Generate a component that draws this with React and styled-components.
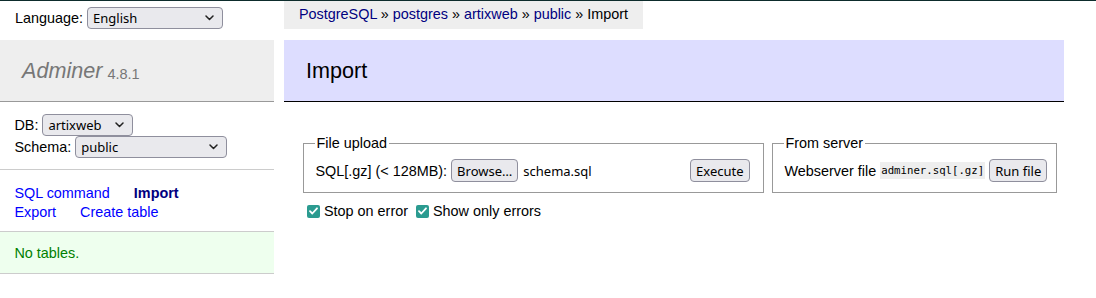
import styled, { createGlobalStyle } from "styled-components";

const GlobalStyle = createGlobalStyle`
  html, body {
    margin: 0;
    padding: 0;
    background: #fff;
  }
  body {
    color: #000;
    font: 14.4px/1.25 "Liberation Sans", Arial, sans-serif;
    border-top: 1px solid #0d2c2c;
  }
`;

const Page = styled.div`
  display: flex;
  align-items: flex-start;
  gap: 10px;
`;

/* left menu */
const Menu = styled.nav`
  width: 274px;
  flex: none;
  display: flex;
  flex-direction: column;
`;

const LangBar = styled.div`
  height: 39px;
  box-sizing: border-box;
  padding: 6px 15px 0;
  display: flex;
  align-items: flex-start;
  gap: 4px;
  line-height: 22px;
`;

const Title = styled.h1`
  margin: 0;
  height: 62px;
  box-sizing: border-box;
  padding: 2px 22px 0;
  display: flex;
  align-items: center;
  gap: 5px;
  background: #eee;
  border-bottom: 1px solid #999;
  font-size: 21.6px;
  font-weight: normal;
  color: #777;
`;

const Brand = styled.span`
  font-style: italic;
`;

const Version = styled.span`
  font-size: 14.5px;
  margin-top: 5px;
`;

const MenuBlock = styled.div`
  padding: ${(p) => p.$pad || "11.5px 14.4px"};
  border-bottom: 1px solid #ccc;
  background: ${(p) => (p.$msg ? "#efe" : "transparent")};
  color: ${(p) => (p.$msg ? "green" : "#000")};
  line-height: 18px;
`;

const FieldLine = styled.div`
  display: flex;
  align-items: center;
  gap: 4px;
  height: 22px;
`;

const LinkRow = styled.div`
  display: flex;
  gap: 24px;
  height: 19px;
  align-items: center;
`;

const Link = styled.a`
  color: ${(p) => (p.$active ? "navy" : "blue")};
  font-weight: ${(p) => (p.$active ? "bold" : "normal")};
  text-decoration: none;
  white-space: nowrap;
`;

/* form controls */
const SelectWrap = styled.span`
  position: relative;
  display: inline-flex;
  width: ${(p) => p.$w}px;
`;

const Select = styled.select`
  appearance: none;
  width: 100%;
  height: 22px;
  box-sizing: border-box;
  padding: 0 22px 0 5px;
  background: #e9e9ed;
  border: 1px solid #8f8f9d;
  border-radius: 4px;
  font: 13px "Noto Sans", sans-serif;
  color: #000;
`;

const Chevron = styled.svg`
  position: absolute;
  right: 9px;
  top: 8px;
  pointer-events: none;
`;

const Button = styled.button`
  height: 23px;
  box-sizing: border-box;
  padding: 0 5px;
  background: #e9e9ed;
  border: 1px solid #8f8f9d;
  border-radius: 4px;
  font: 13px "Noto Sans", sans-serif;
  color: #000;
  flex: none;
`;

/* right content */
const Main = styled.main`
  display: flex;
  flex-direction: column;
  align-items: flex-start;
`;

const Breadcrumb = styled.div`
  background: #eee;
  height: 28px;
  line-height: 26px;
  padding: 0 15px;
  white-space: nowrap;
  a {
    color: navy;
    text-decoration: none;
  }
`;

const Heading = styled.h2`
  margin: 11px 0 20px;
  width: 780px;
  height: 62px;
  box-sizing: border-box;
  padding: 2px 22px 0;
  display: flex;
  align-items: center;
  background: #ddf;
  border-bottom: 1px solid #000;
  font-size: 21.6px;
  font-weight: normal;
`;

const Body = styled.div`
  padding-left: 19px;
  display: flex;
  flex-direction: column;
`;

const Fieldsets = styled.div`
  display: flex;
  gap: 8px;
  align-items: flex-start;
  margin-top: 13px;
`;

const Fieldset = styled.fieldset`
  margin: 0;
  width: ${(p) => p.$w}px;
  box-sizing: border-box;
  border: 1px solid #999;
  padding: 7px 11.5px 10px;
  min-width: 0;
`;

const Legend = styled.legend`
  padding: 0 2px;
  margin-left: -1px;
  line-height: 17px;
`;

const Row = styled.div`
  display: flex;
  align-items: center;
  gap: 4px;
  height: 23px;
  white-space: nowrap;
`;

const FileBox = styled.div`
  display: flex;
  align-items: center;
  gap: 5px;
  width: 235px;
  font: 13px "Noto Sans", sans-serif;
`;

const Code = styled.code`
  background: #eee;
  font: 10.7px "DejaVu Sans Mono", monospace;
  padding: 2px 1px;
`;

const Options = styled.div`
  display: flex;
  gap: 8px;
  margin-top: 9px;
  margin-left: 4px;
  height: 18px;
  align-items: center;
`;

const Check = styled.label`
  display: flex;
  align-items: center;
  gap: 4px;
`;

const Box = styled.span`
  width: 13px;
  height: 13px;
  border-radius: 2px;
  background: #2b9b90;
  display: inline-flex;
  align-items: center;
  justify-content: center;
`;

const ChevronIcon = () => (
  <Chevron width="9" height="6" viewBox="0 0 9 6">
    <path d="M1 1l3.5 3.5L8 1" fill="none" stroke="#222" strokeWidth="1.5" strokeLinecap="round" strokeLinejoin="round" />
  </Chevron>
);

const DropDown = ({ w, value }) => (
  <SelectWrap $w={w}>
    <Select defaultValue={value}>
      <option>{value}</option>
    </Select>
    <ChevronIcon />
  </SelectWrap>
);

const CheckBox = ({ label }) => (
  <Check>
    <Box>
      <svg width="9" height="8" viewBox="0 0 9 8">
        <path d="M1 4.2l2.3 2.3L8 1.3" fill="none" stroke="#fff" strokeWidth="1.8" strokeLinecap="round" strokeLinejoin="round" />
      </svg>
    </Box>
    {label}
  </Check>
);

const App = () => {
  return (
    <>
      <GlobalStyle />
      <Page>
        <Menu>
          <LangBar>
            Language: <DropDown w={136} value="English" />
          </LangBar>
          <Title>
            <Brand>Adminer</Brand>
            <Version>4.8.1</Version>
          </Title>
          <MenuBlock>
            <FieldLine>
              DB: <DropDown w={91} value="artixweb" />
            </FieldLine>
            <FieldLine>
              Schema: <DropDown w={152} value="public" />
            </FieldLine>
          </MenuBlock>
          <MenuBlock $pad="13px 14.4px 10px">
            <LinkRow>
              <Link>SQL command</Link>
              <Link $active>Import</Link>
            </LinkRow>
            <LinkRow>
              <Link>Export</Link>
              <Link>Create table</Link>
            </LinkRow>
          </MenuBlock>
          <MenuBlock $msg>No tables.</MenuBlock>
        </Menu>

        <Main>
          <Breadcrumb>
            <a>PostgreSQL</a> » <a>postgres</a> » <a>artixweb</a> » <a>public</a> » Import
          </Breadcrumb>
          <Heading>Import</Heading>
          <Body>
            <Fieldsets>
              <Fieldset $w={461}>
                <Legend>File upload</Legend>
                <Row>
                  SQL[.gz] (&lt; 128MB):
                  <FileBox>
                    <Button>Browse…</Button>
                    schema.sql
                  </FileBox>
                  <Button>Execute</Button>
                </Row>
              </Fieldset>
              <Fieldset $w={285}>
                <Legend>From server</Legend>
                <Row>
                  Webserver file <Code>adminer.sql[.gz]</Code>
                  <Button>Run file</Button>
                </Row>
              </Fieldset>
            </Fieldsets>
            <Options>
              <CheckBox label="Stop on error" />
              <CheckBox label="Show only errors" />
            </Options>
          </Body>
        </Main>
      </Page>
    </>
  );
};

export default App;
